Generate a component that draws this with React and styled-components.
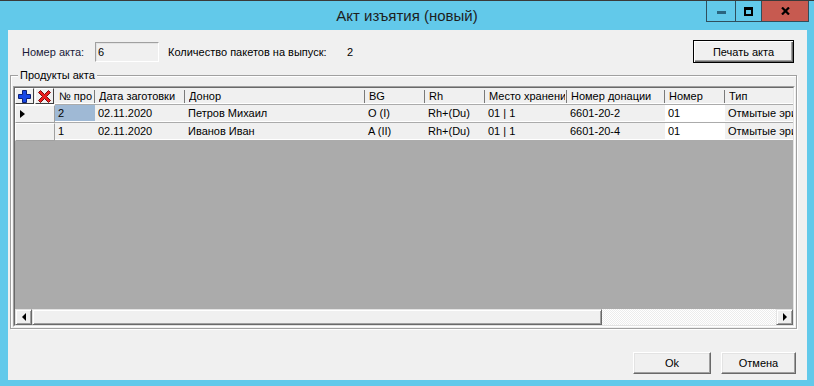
import React from "react";
import styled, { createGlobalStyle } from "styled-components";

const GlobalStyle = createGlobalStyle`
  html, body {
    margin: 0;
    padding: 0;
  }
  body {
    font-family: "Liberation Sans", Arial, sans-serif;
    font-size: 11px;
    color: #000;
  }
`;

const Window = styled.div`
  width: 814px;
  height: 386px;
  box-sizing: border-box;
  background: #62c9ea;
  border-top: 1px solid #3a3a3a;
  display: flex;
  flex-direction: column;
`;

const TitleBar = styled.div`
  height: 29px;
  flex: none;
  display: grid;
  grid-template-columns: 1fr auto 1fr;
`;

const Title = styled.div`
  grid-column: 2;
  align-self: center;
  font-size: 15px;
  color: #1e1e1e;
`;

const Controls = styled.div`
  grid-column: 3;
  justify-self: end;
  align-self: start;
  display: flex;
  margin-right: 5px;
  height: 20px;
  border: 1px solid #2f4e5c;
  border-top: none;
`;

const CtrlButton = styled.div`
  width: ${(p) => p.$w}px;
  display: flex;
  align-items: center;
  justify-content: center;
  background: ${(p) => (p.$close ? "#c75a50" : "transparent")};
  border-left: ${(p) => (p.$first ? "none" : "1px solid #2f4e5c")};
`;

const MinBar = styled.div`
  width: 9px;
  height: 3px;
  margin-top: 2px;
  background: #2a6580;
`;

const MaxBox = styled.div`
  width: 5px;
  height: 4px;
  border: 2px solid #000;
  border-top-width: 3px;
`;

const Client = styled.div`
  flex: 1;
  margin: 0 7px 6px 8px;
  background: #f0f0f0;
  display: flex;
  flex-direction: column;
`;

const TopRow = styled.div`
  display: flex;
  align-items: center;
  height: 23px;
  margin: 10px 13px 0 14px;
`;

const Label = styled.span`
  width: ${(p) => (p.$w ? `${p.$w}px` : "auto")};
  flex: none;
  white-space: nowrap;
  color: ${(p) => p.$color || "#000"};
`;

const ReadOnlyInput = styled.div`
  width: 64px;
  height: 20px;
  box-sizing: border-box;
  border: 1px solid;
  border-color: #a0a0a0 #fff #fff #a0a0a0;
  box-shadow: inset 1px 1px 0 #e3e3e3;
  padding-left: 2px;
  line-height: 18px;
  margin-right: 9px;
`;

const Button = styled.div`
  box-sizing: border-box;
  width: ${(p) => p.$w}px;
  height: ${(p) => p.$h}px;
  display: flex;
  align-items: center;
  justify-content: center;
  background: #f0f0f0;
  border: 1px solid;
  border-color: ${(p) =>
    p.$default ? "#000" : "#fff #696969 #696969 #fff"};
  box-shadow: ${(p) =>
    p.$default
      ? "inset 1px 1px 0 #fff, inset -1px -1px 0 #696969, inset -2px -2px 0 #a0a0a0"
      : "inset -1px -1px 0 #a0a0a0, inset 1px 1px 0 #e3e3e3"};
  margin-left: ${(p) => (p.$push ? "auto" : "0")};
`;

const GroupBox = styled.fieldset`
  margin: 5px 10px 0 2px;
  padding: 4px 1px 1px 2px;
  border: 1px solid #a0a0a0;
  box-shadow: 1px 1px 0 #fff, inset 1px 1px 0 #fff;
  min-width: 0;
`;

const Legend = styled.legend`
  margin-left: 5px;
  padding: 0 2px;
  line-height: 14px;
  background: #f0f0f0;
`;

const GridFrame = styled.div`
  height: 241px;
  box-sizing: border-box;
  border: 1px solid;
  border-color: #a0a0a0 #fff #fff #a0a0a0;
  display: flex;
`;

const GridInner = styled.div`
  flex: 1;
  min-width: 0;
  border: 1px solid;
  border-color: #696969 #e3e3e3 #e3e3e3 #696969;
  display: flex;
  flex-direction: column;
`;

const GridBody = styled.div`
  flex: 1;
  background: #ababab;
  overflow: hidden;
`;

const Row = styled.div`
  display: flex;
  width: max-content;
`;

const HeadCell = styled.div`
  width: ${(p) => p.$w}px;
  height: 16px;
  line-height: 16px;
  box-sizing: border-box;
  padding-left: 4px;
  flex: none;
  background: linear-gradient(#7a7a7a, #7a7a7a) no-repeat right 2px / 1px 13px,
    #f0f0f0;
  border-bottom: 1px solid #fff;
`;

const HeadText = styled.span`
  display: block;
  margin-right: 2px;
  white-space: nowrap;
  overflow: hidden;
`;

const Corner = styled.div`
  width: 40px;
  height: 16px;
  flex: none;
  display: flex;
  gap: 1px;
  background: #f0f0f0;
  border-bottom: 1px solid #fff;
`;

const ToolButton = styled.div`
  width: 19px;
  height: 16px;
  box-sizing: border-box;
  display: flex;
  align-items: center;
  justify-content: center;
  border: 1px solid;
  border-color: #fff #404040 #404040 #fff;
  background: #f0f0f0;
`;

const Indicator = styled.div`
  width: 40px;
  height: 18px;
  box-sizing: border-box;
  flex: none;
  display: flex;
  align-items: center;
  padding-left: 4px;
  background: #f0f0f0;
  border: 1px solid;
  border-color: #fff #a0a0a0 #a0a0a0 #fff;
`;

const RowMarker = styled.div`
  width: 0;
  height: 0;
  border-left: 5px solid #000;
  border-top: 4px solid transparent;
  border-bottom: 4px solid transparent;
`;

const Cell = styled.div`
  width: ${(p) => p.$w}px;
  height: 17px;
  line-height: 17px;
  box-sizing: border-box;
  padding-left: 3px;
  flex: none;
  white-space: nowrap;
  overflow: hidden;
  background: ${(p) => p.$bg || "#f0f0f0"};
  border-bottom: 1px solid #fff;
`;

const ScrollBar = styled.div`
  height: 16px;
  flex: none;
  display: flex;
  background: repeating-conic-gradient(#fff 0 25%, #ececec 0 50%) 0 0 / 2px
    2px;
`;

const Track = styled.div`
  flex: 1;
`;

const Raised = styled.div`
  box-sizing: border-box;
  height: 16px;
  flex: none;
  display: flex;
  align-items: center;
  justify-content: center;
  width: ${(p) => p.$w}px;
  background: #f0f0f0;
  border: 1px solid;
  border-color: #e3e3e3 #696969 #696969 #e3e3e3;
  box-shadow: inset 1px 1px 0 #fff, inset -1px -1px 0 #a0a0a0;
`;

const Arrow = styled.div`
  width: 0;
  height: 0;
  border-top: 4px solid transparent;
  border-bottom: 4px solid transparent;
  ${(p) =>
    p.$dir === "left"
      ? "border-right: 4px solid #000;"
      : "border-left: 4px solid #000;"}
`;

const Footer = styled.div`
  margin: auto 11px 6px 0;
  display: flex;
  justify-content: flex-end;
  gap: 10px;
`;

const columns = [
  { title: "№ про", w: 40 },
  { title: "Дата заготовки", w: 90 },
  { title: "Донор", w: 180 },
  { title: "BG", w: 60 },
  { title: "Rh", w: 60 },
  { title: "Место хранения", w: 82 },
  { title: "Номер донации", w: 98 },
  { title: "Номер", w: 60 },
  { title: "Тип", w: 120 },
];

const rows = [
  ["2", "02.11.2020", "Петров Михаил", "O (I)", "Rh+(Du)", "01 | 1", "6601-20-2", "01", "Отмытые эритроциты"],
  ["1", "02.11.2020", "Иванов Иван", "A (II)", "Rh+(Du)", "01 | 1", "6601-20-4", "01", "Отмытые эритроциты"],
];

const PlusIcon = () => (
  <svg width="13" height="13" viewBox="0 0 13 13">
    <path
      d="M4.5 0.5H8.5V4.5H12.5V8.5H8.5V12.5H4.5V8.5H0.5V4.5H4.5Z"
      fill="#1747e6"
      stroke="#0a1f7a"
      strokeWidth="1"
    />
  </svg>
);

const CrossIcon = () => (
  <svg width="13" height="13" viewBox="0 0 13 13">
    <path
      d="M0.5 2.5L2.5 0.5L6.5 4.5L10.5 0.5L12.5 2.5L8.5 6.5L12.5 10.5L10.5 12.5L6.5 8.5L2.5 12.5L0.5 10.5L4.5 6.5Z"
      fill="#ec1c1c"
      stroke="#7a0a0a"
      strokeWidth="1"
    />
  </svg>
);

const CloseGlyph = () => (
  <svg width="9" height="8" viewBox="0 0 9 8">
    <path d="M1 0.5L8 7.5M8 0.5L1 7.5" stroke="#000" strokeWidth="2.2" />
  </svg>
);

function cellBg(rowIdx, colIdx) {
  if (rowIdx === 0 && colIdx === 0) return "#9fb9d5";
  if (colIdx === 7) return "#fff";
  return undefined;
}

export default function App() {
  return (
    <>
      <GlobalStyle />
      <Window>
        <TitleBar>
          <Title>Акт изъятия (новый)</Title>
          <Controls>
            <CtrlButton $w={28} $first>
              <MinBar />
            </CtrlButton>
            <CtrlButton $w={25}>
              <MaxBox />
            </CtrlButton>
            <CtrlButton $w={46} $close>
              <CloseGlyph />
            </CtrlButton>
          </Controls>
        </TitleBar>

        <Client>
          <TopRow>
            <Label $w={73} $color="#1a1a3a">Номер акта:</Label>
            <ReadOnlyInput>6</ReadOnlyInput>
            <Label $w={179}>Количество пакетов на выпуск:</Label>
            <Label>2</Label>
            <Button $w={101} $h={23} $default $push>
              Печать акта
            </Button>
          </TopRow>

          <GroupBox>
            <Legend>Продукты акта</Legend>
            <GridFrame>
              <GridInner>
                <GridBody>
                  <Row>
                    <Corner>
                      <ToolButton>
                        <PlusIcon />
                      </ToolButton>
                      <ToolButton>
                        <CrossIcon />
                      </ToolButton>
                    </Corner>
                    {columns.map((c) => (
                      <HeadCell key={c.title} $w={c.w}>
                        <HeadText>{c.title}</HeadText>
                      </HeadCell>
                    ))}
                  </Row>
                  {rows.map((r, i) => (
                    <Row key={i}>
                      <Indicator>{i === 0 && <RowMarker />}</Indicator>
                      {r.map((v, j) => (
                        <Cell key={j} $w={columns[j].w} $bg={cellBg(i, j)}>
                          {v}
                        </Cell>
                      ))}
                    </Row>
                  ))}
                </GridBody>
                <ScrollBar>
                  <Raised $w={17}>
                    <Arrow $dir="left" />
                  </Raised>
                  <Raised $w={570} />
                  <Track />
                  <Raised $w={17}>
                    <Arrow $dir="right" />
                  </Raised>
                </ScrollBar>
              </GridInner>
            </GridFrame>
          </GroupBox>

          <Footer>
            <Button $w={78} $h={22}>
              Ok
            </Button>
            <Button $w={75} $h={22}>
              Отмена
            </Button>
          </Footer>
        </Client>
      </Window>
    </>
  );
}
